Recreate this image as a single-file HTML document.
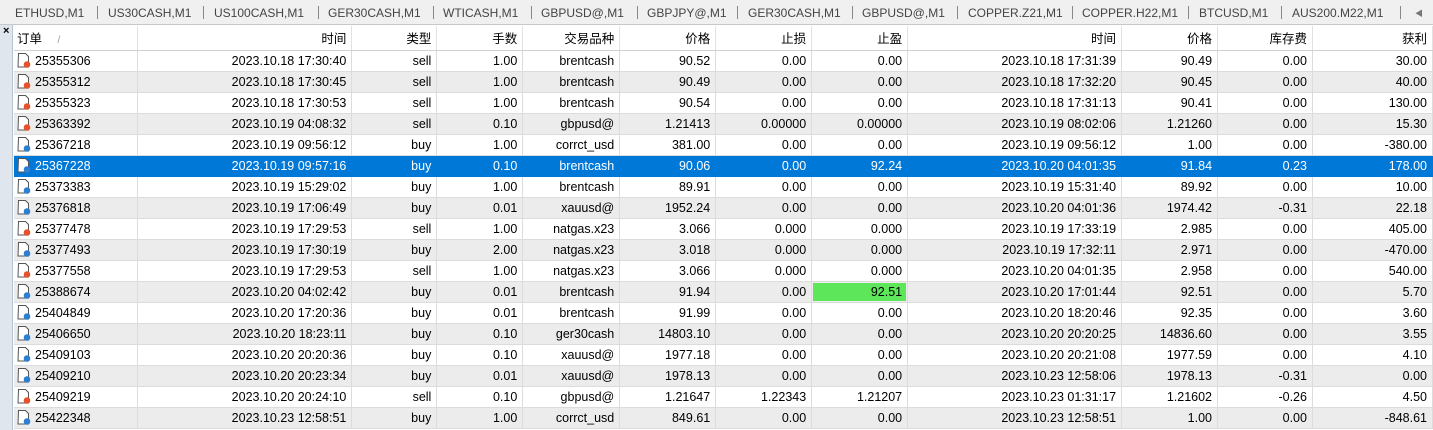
<!DOCTYPE html>
<html><head><meta charset="utf-8"><style>
*{margin:0;padding:0;box-sizing:border-box}
body{width:1433px;height:430px;overflow:hidden;background:#fff;font-family:"Liberation Sans","Noto Sans CJK SC",sans-serif;font-size:12.5px;color:#000;position:relative}
.tabs{position:absolute;left:0;top:0;width:1433px;height:25px;background:#f0f0f0;border-bottom:1px solid #c8c8c8}
.tabs span{position:absolute;top:6px;color:#444;font-size:12px;white-space:nowrap}
.tabs i{position:absolute;top:6px;width:1px;height:13px;background:#888}
.side{position:absolute;left:0;top:25px;width:13px;height:405px;background:#dfe6ee;border-right:1px solid #b8c4d0}
.side b{position:absolute;left:3px;top:0;font-size:11px;font-weight:bold}
table{position:absolute;left:14px;top:26px;border-collapse:collapse;table-layout:fixed}
td,th{height:21px;padding:0 5px;white-space:nowrap;overflow:hidden;text-align:right;font-weight:normal;border-right:1px solid #dcdcdc;border-bottom:1px solid #dcdcdc}
th{height:24px;background:#fff;border-right:1px solid #e2e2e2;border-bottom:1px solid #d0d0d0}
th:first-child,td:first-child{text-align:left;padding-left:3px}
tr.g td{background:#ececec}
tr.s td{background:#0078d7;color:#fff;border-color:#0078d7}
td.gr{background:#5ee65a!important;box-shadow:inset 0 0 0 1px #ececec}
td svg{vertical-align:-3px;margin-right:4px}
</style></head><body>
<div class="tabs">
<span style="left:15px">ETHUSD,M1</span><i style="left:97px"></i>
<span style="left:108px">US30CASH,M1</span><i style="left:203px"></i>
<span style="left:214px">US100CASH,M1</span><i style="left:318px"></i>
<span style="left:328px">GER30CASH,M1</span><i style="left:433px"></i>
<span style="left:443px">WTICASH,M1</span><i style="left:531px"></i>
<span style="left:541px">GBPUSD@,M1</span><i style="left:637px"></i>
<span style="left:647px">GBPJPY@,M1</span><i style="left:737px"></i>
<span style="left:748px">GER30CASH,M1</span><i style="left:852px"></i>
<span style="left:862px">GBPUSD@,M1</span><i style="left:957px"></i>
<span style="left:968px">COPPER.Z21,M1</span><i style="left:1072px"></i>
<span style="left:1082px">COPPER.H22,M1</span><i style="left:1188px"></i>
<span style="left:1199px">BTCUSD,M1</span><i style="left:1281px"></i>
<span style="left:1292px">AUS200.M22,M1</span><i style="left:1400px"></i>
<span style="left:1415px;font-size:8px;top:8px;color:#777">◀</span>
</div>
<div class="side"><b>×</b></div>
<svg width="0" height="0" style="position:absolute"><defs>
<symbol id="r" viewBox="0 0 14 15"><path d="M1.5 0.5h7l3 3v10.5h-10.5z" fill="#fff" stroke="#555"/><circle cx="10" cy="11.5" r="3.3" fill="#e8522a"/></symbol>
<symbol id="b" viewBox="0 0 14 15"><path d="M1.5 0.5h7l3 3v10.5h-10.5z" fill="#fff" stroke="#555"/><circle cx="10" cy="11.5" r="3.3" fill="#2e7fd0"/></symbol>
</defs></svg>
<table>
<colgroup><col style="width:124px"><col style="width:214px"><col style="width:85px"><col style="width:86px"><col style="width:97px"><col style="width:96px"><col style="width:96px"><col style="width:96px"><col style="width:214px"><col style="width:96px"><col style="width:95px"><col style="width:120px"></colgroup>
<tr><th>订单 <span style="color:#999;font-size:10px;margin-left:12px">/</span></th><th>时间</th><th>类型</th><th>手数</th><th>交易品种</th><th>价格</th><th>止损</th><th>止盈</th><th>时间</th><th>价格</th><th>库存费</th><th>获利</th></tr>
<tr><td><svg width="14" height="15"><use href="#r"/></svg>25355306</td><td>2023.10.18 17:30:40</td><td>sell</td><td>1.00</td><td>brentcash</td><td>90.52</td><td>0.00</td><td>0.00</td><td>2023.10.18 17:31:39</td><td>90.49</td><td>0.00</td><td>30.00</td></tr>
<tr class="g"><td><svg width="14" height="15"><use href="#r"/></svg>25355312</td><td>2023.10.18 17:30:45</td><td>sell</td><td>1.00</td><td>brentcash</td><td>90.49</td><td>0.00</td><td>0.00</td><td>2023.10.18 17:32:20</td><td>90.45</td><td>0.00</td><td>40.00</td></tr>
<tr><td><svg width="14" height="15"><use href="#r"/></svg>25355323</td><td>2023.10.18 17:30:53</td><td>sell</td><td>1.00</td><td>brentcash</td><td>90.54</td><td>0.00</td><td>0.00</td><td>2023.10.18 17:31:13</td><td>90.41</td><td>0.00</td><td>130.00</td></tr>
<tr class="g"><td><svg width="14" height="15"><use href="#r"/></svg>25363392</td><td>2023.10.19 04:08:32</td><td>sell</td><td>0.10</td><td>gbpusd@</td><td>1.21413</td><td>0.00000</td><td>0.00000</td><td>2023.10.19 08:02:06</td><td>1.21260</td><td>0.00</td><td>15.30</td></tr>
<tr><td><svg width="14" height="15"><use href="#b"/></svg>25367218</td><td>2023.10.19 09:56:12</td><td>buy</td><td>1.00</td><td>corrct_usd</td><td>381.00</td><td>0.00</td><td>0.00</td><td>2023.10.19 09:56:12</td><td>1.00</td><td>0.00</td><td>-380.00</td></tr>
<tr class="s"><td><svg width="14" height="15"><use href="#b"/></svg>25367228</td><td>2023.10.19 09:57:16</td><td>buy</td><td>0.10</td><td>brentcash</td><td>90.06</td><td>0.00</td><td>92.24</td><td>2023.10.20 04:01:35</td><td>91.84</td><td>0.23</td><td>178.00</td></tr>
<tr><td><svg width="14" height="15"><use href="#b"/></svg>25373383</td><td>2023.10.19 15:29:02</td><td>buy</td><td>1.00</td><td>brentcash</td><td>89.91</td><td>0.00</td><td>0.00</td><td>2023.10.19 15:31:40</td><td>89.92</td><td>0.00</td><td>10.00</td></tr>
<tr class="g"><td><svg width="14" height="15"><use href="#b"/></svg>25376818</td><td>2023.10.19 17:06:49</td><td>buy</td><td>0.01</td><td>xauusd@</td><td>1952.24</td><td>0.00</td><td>0.00</td><td>2023.10.20 04:01:36</td><td>1974.42</td><td>-0.31</td><td>22.18</td></tr>
<tr><td><svg width="14" height="15"><use href="#r"/></svg>25377478</td><td>2023.10.19 17:29:53</td><td>sell</td><td>1.00</td><td>natgas.x23</td><td>3.066</td><td>0.000</td><td>0.000</td><td>2023.10.19 17:33:19</td><td>2.985</td><td>0.00</td><td>405.00</td></tr>
<tr class="g"><td><svg width="14" height="15"><use href="#b"/></svg>25377493</td><td>2023.10.19 17:30:19</td><td>buy</td><td>2.00</td><td>natgas.x23</td><td>3.018</td><td>0.000</td><td>0.000</td><td>2023.10.19 17:32:11</td><td>2.971</td><td>0.00</td><td>-470.00</td></tr>
<tr><td><svg width="14" height="15"><use href="#r"/></svg>25377558</td><td>2023.10.19 17:29:53</td><td>sell</td><td>1.00</td><td>natgas.x23</td><td>3.066</td><td>0.000</td><td>0.000</td><td>2023.10.20 04:01:35</td><td>2.958</td><td>0.00</td><td>540.00</td></tr>
<tr class="g"><td><svg width="14" height="15"><use href="#b"/></svg>25388674</td><td>2023.10.20 04:02:42</td><td>buy</td><td>0.01</td><td>brentcash</td><td>91.94</td><td>0.00</td><td class="gr">92.51</td><td>2023.10.20 17:01:44</td><td>92.51</td><td>0.00</td><td>5.70</td></tr>
<tr><td><svg width="14" height="15"><use href="#b"/></svg>25404849</td><td>2023.10.20 17:20:36</td><td>buy</td><td>0.01</td><td>brentcash</td><td>91.99</td><td>0.00</td><td>0.00</td><td>2023.10.20 18:20:46</td><td>92.35</td><td>0.00</td><td>3.60</td></tr>
<tr class="g"><td><svg width="14" height="15"><use href="#b"/></svg>25406650</td><td>2023.10.20 18:23:11</td><td>buy</td><td>0.10</td><td>ger30cash</td><td>14803.10</td><td>0.00</td><td>0.00</td><td>2023.10.20 20:20:25</td><td>14836.60</td><td>0.00</td><td>3.55</td></tr>
<tr><td><svg width="14" height="15"><use href="#b"/></svg>25409103</td><td>2023.10.20 20:20:36</td><td>buy</td><td>0.10</td><td>xauusd@</td><td>1977.18</td><td>0.00</td><td>0.00</td><td>2023.10.20 20:21:08</td><td>1977.59</td><td>0.00</td><td>4.10</td></tr>
<tr class="g"><td><svg width="14" height="15"><use href="#b"/></svg>25409210</td><td>2023.10.20 20:23:34</td><td>buy</td><td>0.01</td><td>xauusd@</td><td>1978.13</td><td>0.00</td><td>0.00</td><td>2023.10.23 12:58:06</td><td>1978.13</td><td>-0.31</td><td>0.00</td></tr>
<tr><td><svg width="14" height="15"><use href="#r"/></svg>25409219</td><td>2023.10.20 20:24:10</td><td>sell</td><td>0.10</td><td>gbpusd@</td><td>1.21647</td><td>1.22343</td><td>1.21207</td><td>2023.10.23 01:31:17</td><td>1.21602</td><td>-0.26</td><td>4.50</td></tr>
<tr class="g"><td><svg width="14" height="15"><use href="#b"/></svg>25422348</td><td>2023.10.23 12:58:51</td><td>buy</td><td>1.00</td><td>corrct_usd</td><td>849.61</td><td>0.00</td><td>0.00</td><td>2023.10.23 12:58:51</td><td>1.00</td><td>0.00</td><td>-848.61</td></tr>
</table>
</body></html>
